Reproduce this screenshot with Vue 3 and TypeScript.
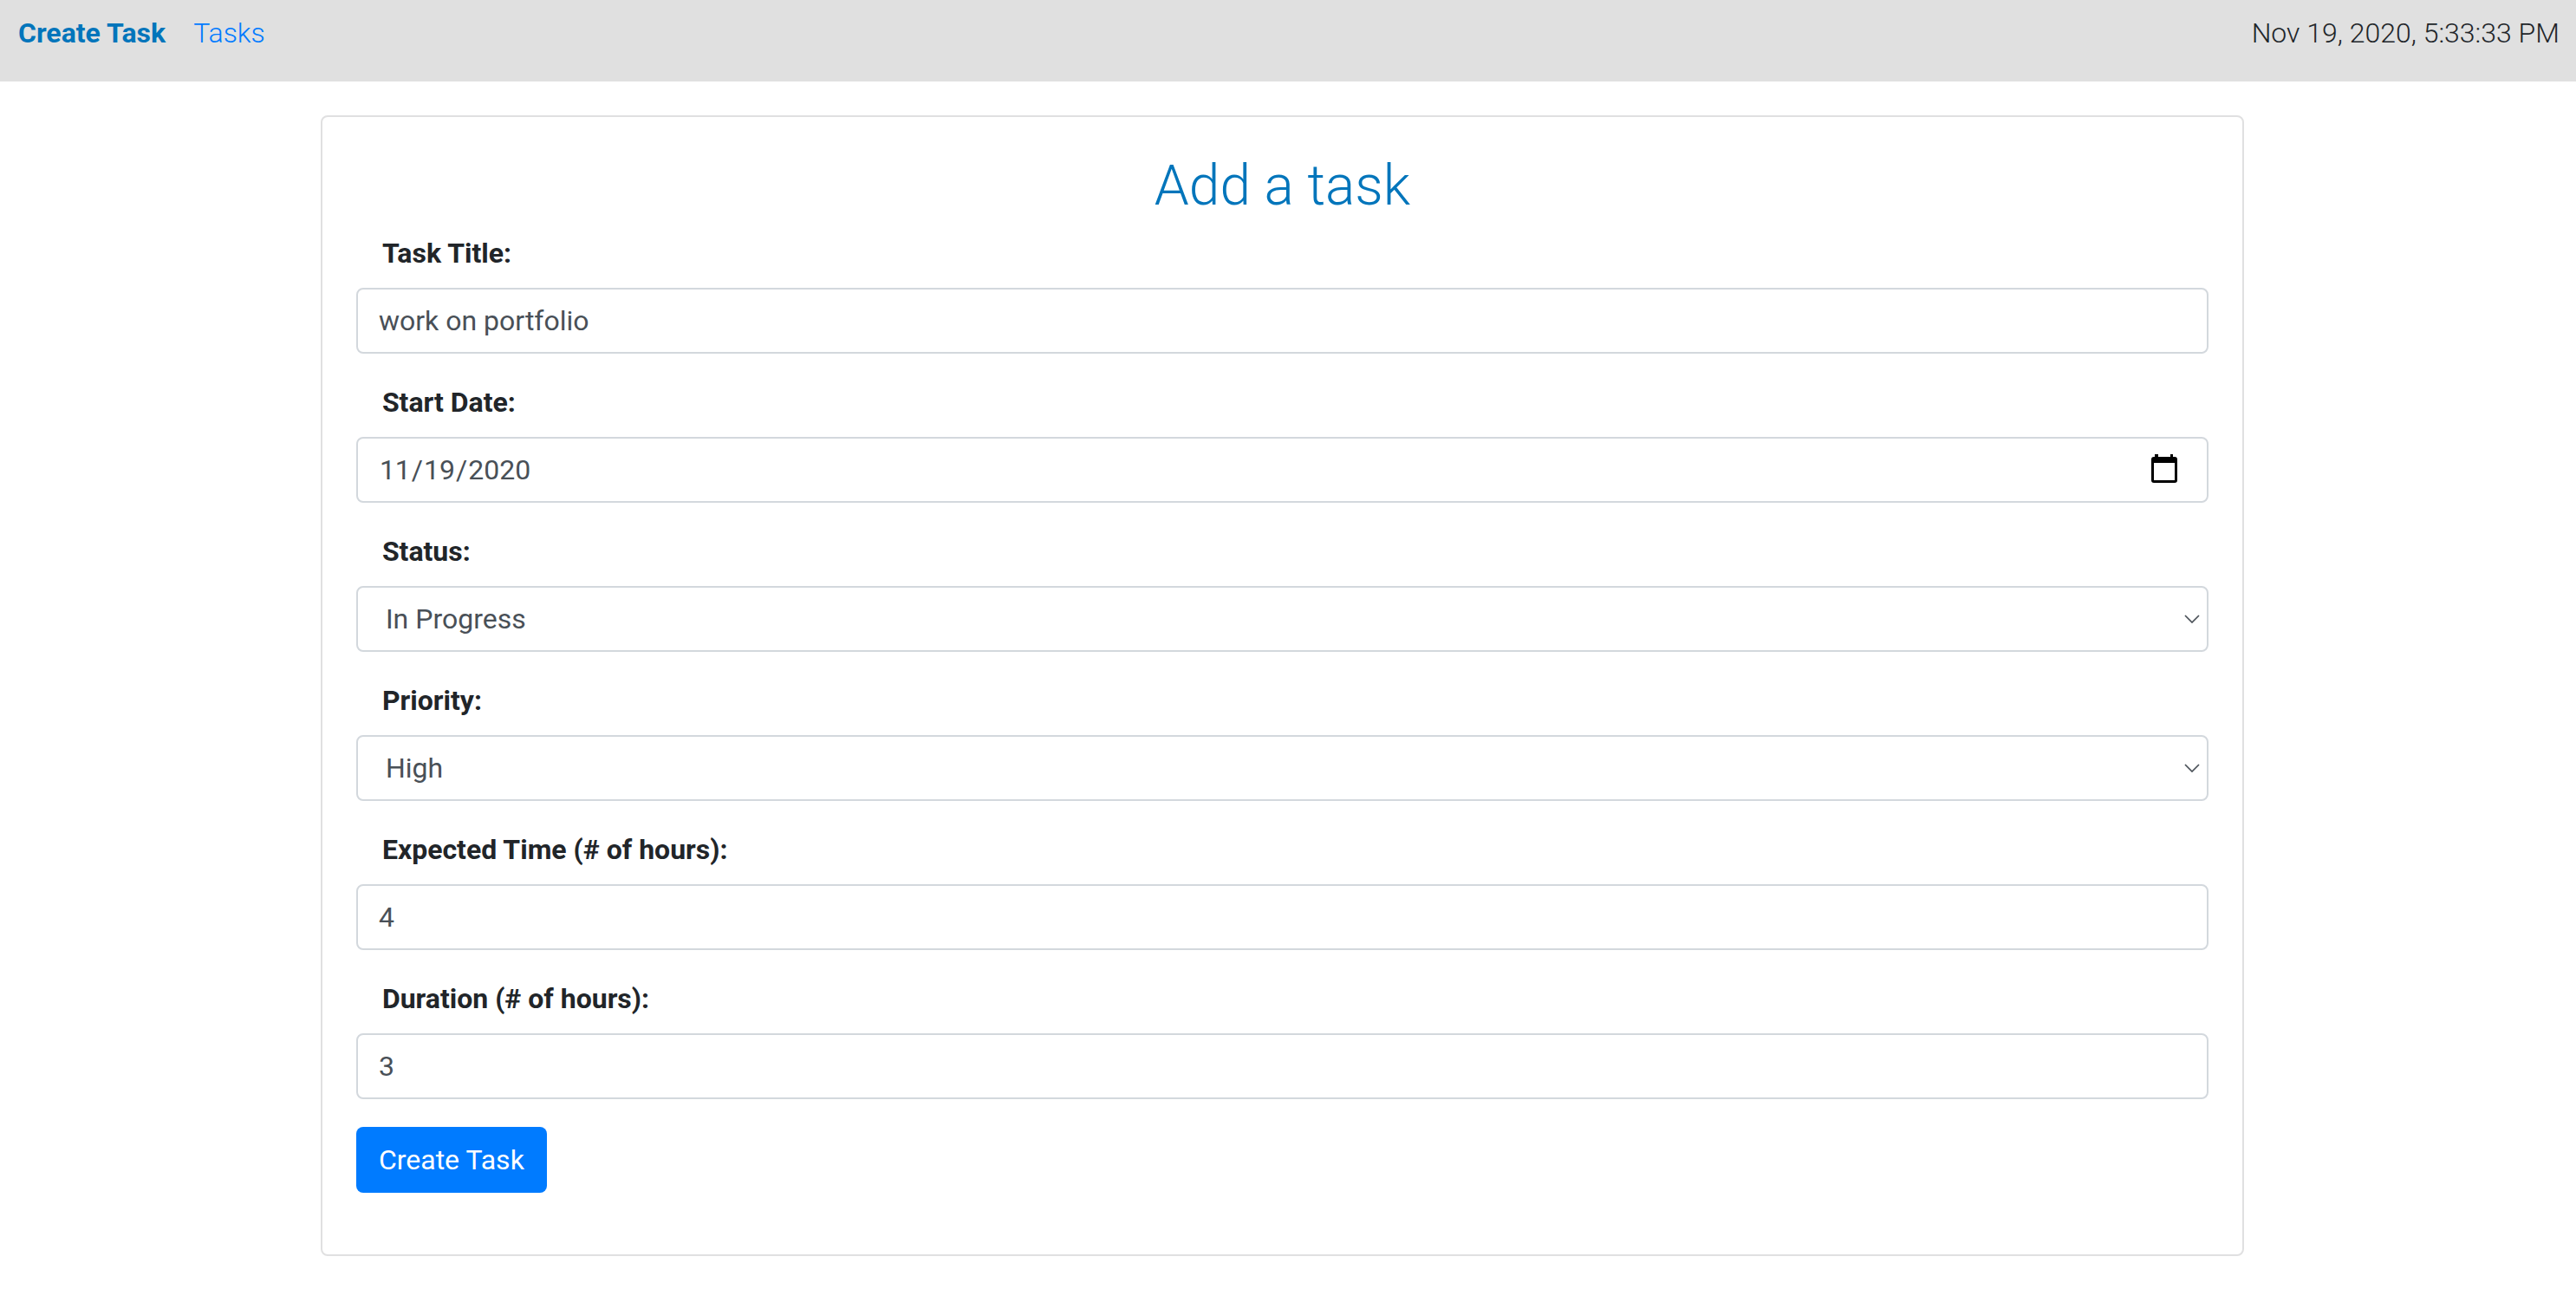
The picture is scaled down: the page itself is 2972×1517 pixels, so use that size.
<script setup lang="ts">
import { reactive, ref } from 'vue'

interface TaskForm {
  title: string
  startDate: string
  status: string
  priority: string
  expected: string
  duration: string
}

const form = reactive<TaskForm>({
  title: 'work on portfolio',
  startDate: '2020-11-19',
  status: 'In Progress',
  priority: 'High',
  expected: '4',
  duration: '3',
})

const statuses: string[] = ['In Progress']
const priorities: string[] = ['High']
const now = ref<string>('Nov 19, 2020, 5:33:33 PM')
</script>

<template>
  <div class="page">
    <header class="topbar">
      <nav class="links">
        <a class="link active" href="#create">Create Task</a>
        <a class="link" href="#tasks">Tasks</a>
      </nav>
      <time class="clock">{{ now }}</time>
    </header>

    <main class="content">
      <form class="card" @submit.prevent>
        <h1 class="heading">Add a task</h1>

        <div class="field">
          <label class="label" for="title">Task Title:</label>
          <input id="title" v-model="form.title" class="control" type="text" />
        </div>

        <div class="field">
          <label class="label" for="start">Start Date:</label>
          <div class="control-wrap">
            <input id="start" v-model="form.startDate" class="control date" type="date" />
            <svg class="calendar" viewBox="0 0 30 34" aria-hidden="true">
              <path
                fill="#000"
                fill-rule="evenodd"
                d="M4 0h4v3h14V0h3v3h2a3 3 0 0 1 3 3v24a3 3 0 0 1-3 3H3a3 3 0 0 1-3-3V6a3 3 0 0 1 3-3h1zM3 10v20h24V10z"
              />
            </svg>
          </div>
        </div>

        <div class="field">
          <label class="label" for="status">Status:</label>
          <div class="control-wrap">
            <select id="status" v-model="form.status" class="control select">
              <option v-for="s in statuses" :key="s" :value="s">{{ s }}</option>
            </select>
            <svg class="chevron" viewBox="0 0 18 10" aria-hidden="true">
              <path fill="none" stroke="#495057" stroke-width="1.7" d="M1 1l8 8 8-8" />
            </svg>
          </div>
        </div>

        <div class="field">
          <label class="label" for="priority">Priority:</label>
          <div class="control-wrap">
            <select id="priority" v-model="form.priority" class="control select">
              <option v-for="p in priorities" :key="p" :value="p">{{ p }}</option>
            </select>
            <svg class="chevron" viewBox="0 0 18 10" aria-hidden="true">
              <path fill="none" stroke="#495057" stroke-width="1.7" d="M1 1l8 8 8-8" />
            </svg>
          </div>
        </div>

        <div class="field">
          <label class="label" for="expected">Expected Time (# of hours):</label>
          <input id="expected" v-model="form.expected" class="control" type="text" inputmode="numeric" />
        </div>

        <div class="field">
          <label class="label" for="duration">Duration (# of hours):</label>
          <input id="duration" v-model="form.duration" class="control" type="text" inputmode="numeric" />
        </div>

        <button class="submit" type="submit">Create Task</button>
      </form>
    </main>
  </div>
</template>

<style>
body {
  margin: 0;
  background: #fff;
}
</style>

<style scoped>
.page {
  font-family: Roboto, sans-serif;
  font-size: 32px;
  font-weight: 300;
  line-height: 48px;
  color: #212529;
}

.topbar {
  display: flex;
  justify-content: space-between;
  padding: 14px 19px 32px 21px;
  background: #e0e0e0;
}

.links {
  display: flex;
  gap: 32px;
}

.link {
  color: #007bff;
  text-decoration: none;
}

.link.active {
  color: #0275bb;
  font-weight: 700;
}

.content {
  display: flex;
  justify-content: center;
  padding: 39px 13px 64px 0;
}

.card {
  box-sizing: border-box;
  width: 75%;
  padding: 42px 39px 71px;
  border: 2px solid #e0e0e1;
  border-radius: 8px;
}

.heading {
  margin: 0 0 15px;
  font-size: 64px;
  font-weight: 300;
  line-height: 76px;
  text-align: center;
  color: #0275bb;
}

.field {
  display: flex;
  flex-direction: column;
  gap: 16px;
  margin-bottom: 32px;
}

.label {
  align-self: flex-start;
  padding-left: 30px;
  font-weight: 700;
}

.control-wrap {
  position: relative;
  display: flex;
}

.control {
  box-sizing: border-box;
  width: 100%;
  height: 76px;
  margin: 0;
  padding: 0 24px;
  border: 2px solid #d3d8dd;
  border-radius: 8px;
  outline: none;
  background: #fff;
  font-family: inherit;
  font-size: 32px;
  font-weight: 400;
  line-height: 48px;
  color: #495057;
}

.select {
  appearance: none;
  padding: 0 32px;
}

.date::-webkit-calendar-picker-indicator {
  opacity: 0;
}

.calendar,
.chevron {
  position: absolute;
  pointer-events: none;
}

.calendar {
  top: 20px;
  right: 36px;
  width: 30px;
  height: 34px;
}

.chevron {
  top: 33px;
  right: 10px;
  width: 18px;
  height: 10px;
}

.submit {
  display: block;
  height: 76px;
  padding: 0 26px;
  border: 0;
  border-radius: 8px;
  background: #007bff;
  font-family: inherit;
  font-size: 32px;
  font-weight: 400;
  line-height: 48px;
  color: #fff;
  cursor: pointer;
}
</style>
